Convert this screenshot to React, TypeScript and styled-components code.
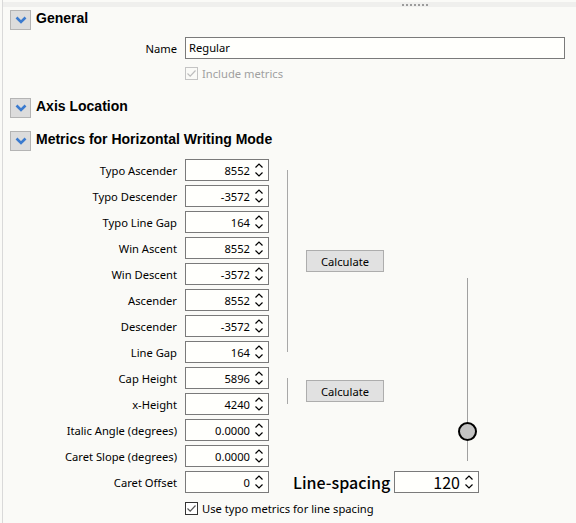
import React from 'react';
import styled, { createGlobalStyle } from 'styled-components';

const GlobalStyle = createGlobalStyle`
    html, body {
        margin: 0;
        padding: 0;
        background-color: #fafaf7;
    }
    body {
        font-family: "Segoe UI", "Noto Sans", "Liberation Sans", sans-serif;
        font-size: 11.2px;
        color: #000;
    }
`;

const Panel = styled.div`
    width: 574px;
    height: 523px;
    margin-left: 2px;
    border-left: 1px solid #d9d9d9;
    box-sizing: border-box;
    overflow: hidden;
`;

const TopBar = styled.div`
    height: 5px;
    margin-top: 2px;
    background-color: #efefed;
    display: flex;
    align-items: center;
    gap: 2px;
    padding-left: 399px;
`;

const GripDot = styled.span`
    width: 2px;
    height: 2px;
    background-color: #9c9c9c;
`;

const SectionHeader = styled.div<{ top: number }>`
    display: flex;
    align-items: flex-start;
    gap: 5px;
    padding-left: 7px;
    margin-top: ${(props) => props.top}px;
`;

const ToggleButton = styled.button`
    width: 21px;
    height: 20px;
    padding: 0;
    border: 1px solid #b4b4b4;
    background-color: #dcdcdc;
    display: flex;
    align-items: center;
    justify-content: center;
`;

const SectionTitle = styled.h2`
    margin: 0;
    font-family: "Liberation Sans", Arial, sans-serif;
    font-size: 14px;
    font-weight: bold;
    line-height: 16px;
`;

const FormRow = styled.div<{ top: number }>`
    display: grid;
    grid-template-columns: 174px auto;
    column-gap: 8px;
    align-items: center;
    margin-top: ${(props) => props.top}px;
`;

const Label = styled.span`
    text-align: right;
    white-space: nowrap;
`;

const TextInput = styled.div`
    width: 380px;
    height: 22px;
    box-sizing: border-box;
    border: 1px solid #7a7a7a;
    background-color: #fffffc;
    padding-left: 3px;
    line-height: 20px;
`;

const CheckRow = styled.label<{ disabled?: boolean }>`
    display: flex;
    align-items: center;
    gap: 4px;
    color: ${(props) => (props.disabled ? '#a0a0a0' : '#000')};
    line-height: 13px;
`;

const CheckBox = styled.span<{ disabled?: boolean }>`
    width: 13px;
    height: 13px;
    box-sizing: border-box;
    border: 1px solid ${(props) => (props.disabled ? '#c4c4c4' : '#333')};
    background-color: ${(props) => (props.disabled ? '#fafaf7' : '#fff')};
    display: flex;
    align-items: center;
    justify-content: center;
`;

const MetricsGrid = styled.div`
    display: grid;
    grid-template-columns: 174px 84px 170px 24px;
    grid-auto-rows: 22px;
    column-gap: 8px;
    row-gap: 4px;
    margin-top: 8px;
`;

const GridLabel = styled(Label)<{ row: number }>`
    grid-column: 1;
    grid-row: ${(props) => props.row};
    align-self: center;
`;

const SpinBox = styled.div<{ width?: number; big?: boolean }>`
    width: ${(props) => props.width ?? 84}px;
    height: 22px;
    box-sizing: border-box;
    border: 1px solid #7a7a7a;
    background-color: #fffffc;
    display: flex;
    align-items: center;
    justify-content: flex-end;
    padding-right: 4px;
    gap: 4px;
    font-size: ${(props) => (props.big ? '16px' : 'inherit')};
    font-family: ${(props) =>
        props.big ? '"Noto Sans CJK JP", "Noto Sans", sans-serif' : 'inherit'};
`;

const SpinCell = styled.div<{ row: number }>`
    grid-column: 2;
    grid-row: ${(props) => props.row};
`;

const Bracket = styled.div<{ rows: string }>`
    grid-column: 3;
    grid-row: ${(props) => props.rows};
    margin: 11px 0 11px 10px;
    border-left: 1px solid #a8a8a8;
    display: flex;
    align-items: center;
    padding-left: 18px;
`;

const CalcButton = styled.button`
    width: 78px;
    height: 22px;
    box-sizing: border-box;
    border: 1px solid #adadad;
    background-color: #e1e1e1;
    font-family: inherit;
    font-size: inherit;
    padding: 0;
    color: #000;
`;

const Slider = styled.div`
    grid-column: 4;
    grid-row: 5 / 13;
    display: flex;
    flex-direction: column;
    align-items: center;
    padding: 15px 0 6px;
`;

const Track = styled.div<{ grow?: boolean }>`
    width: 1px;
    background-color: #a0a0a0;
    flex: ${(props) => (props.grow ? 1 : '0 0 20px')};
`;

const Knob = styled.div`
    width: 19px;
    height: 19px;
    box-sizing: border-box;
    border-radius: 50%;
    border: 2px solid #000;
    background-color: #c3c3c3;
`;

const SpacingRow = styled.div`
    grid-column: 3 / 5;
    grid-row: 13;
    display: flex;
    align-items: center;
    justify-content: space-between;
    padding-left: 16px;
`;

const SpacingLabel = styled.span`
    font-family: "Noto Sans CJK JP", "Noto Sans", sans-serif;
    font-size: 16px;
    font-weight: 500;
`;

const FooterRow = styled(FormRow)`
    margin-top: 9px;
`;

function Chevron() {
    return (
        <svg width="12" height="8" viewBox="0 0 12 8">
            <path d="M1.5 1.5 L6 6 L10.5 1.5" fill="none" stroke="#3b7bcf" strokeWidth="2.6" />
        </svg>
    );
}

function Tick({ color }: { color: string }) {
    return (
        <svg width="11" height="11" viewBox="0 0 11 11">
            <path d="M1.5 5.5 L4.2 8.2 L9.5 2.5" fill="none" stroke={color} strokeWidth="1.2" />
        </svg>
    );
}

function Arrows() {
    return (
        <svg width="10" height="16" viewBox="0 0 10 16">
            <path d="M1.5 5.5 L5 2 L8.5 5.5" fill="none" stroke="#000" strokeWidth="1.2" />
            <path d="M1.5 10.5 L5 14 L8.5 10.5" fill="none" stroke="#000" strokeWidth="1.2" />
        </svg>
    );
}

const metrics = [
    { label: 'Typo Ascender', value: '8552' },
    { label: 'Typo Descender', value: '-3572' },
    { label: 'Typo Line Gap', value: '164' },
    { label: 'Win Ascent', value: '8552' },
    { label: 'Win Descent', value: '-3572' },
    { label: 'Ascender', value: '8552' },
    { label: 'Descender', value: '-3572' },
    { label: 'Line Gap', value: '164' },
    { label: 'Cap Height', value: '5896' },
    { label: 'x-Height', value: '4240' },
    { label: 'Italic Angle (degrees)', value: '0.0000' },
    { label: 'Caret Slope (degrees)', value: '0.0000' },
    { label: 'Caret Offset', value: '0' },
];

export default function App(): JSX.Element {
    return (
        <>
            <GlobalStyle />
            <Panel>
                <TopBar>
                    {Array.from({ length: 7 }).map((_, i) => (
                        <GripDot key={i} />
                    ))}
                </TopBar>

                <SectionHeader top={3}>
                    <ToggleButton>
                        <Chevron />
                    </ToggleButton>
                    <SectionTitle>General</SectionTitle>
                </SectionHeader>
                <FormRow top={7}>
                    <Label>Name</Label>
                    <TextInput>Regular</TextInput>
                </FormRow>
                <FormRow top={8}>
                    <span />
                    <CheckRow disabled>
                        <CheckBox disabled>
                            <Tick color="#bdbdbd" />
                        </CheckBox>
                        Include metrics
                    </CheckRow>
                </FormRow>

                <SectionHeader top={18}>
                    <ToggleButton>
                        <Chevron />
                    </ToggleButton>
                    <SectionTitle>Axis Location</SectionTitle>
                </SectionHeader>

                <SectionHeader top={13}>
                    <ToggleButton>
                        <Chevron />
                    </ToggleButton>
                    <SectionTitle>Metrics for Horizontal Writing Mode</SectionTitle>
                </SectionHeader>

                <MetricsGrid>
                    {metrics.map((m, idx) => (
                        <React.Fragment key={m.label}>
                            <GridLabel row={idx + 1}>{m.label}</GridLabel>
                            <SpinCell row={idx + 1}>
                                <SpinBox>
                                    {m.value}
                                    <Arrows />
                                </SpinBox>
                            </SpinCell>
                        </React.Fragment>
                    ))}
                    <Bracket rows="1 / 9">
                        <CalcButton>Calculate</CalcButton>
                    </Bracket>
                    <Bracket rows="9 / 11">
                        <CalcButton>Calculate</CalcButton>
                    </Bracket>
                    <Slider>
                        <Track grow />
                        <Knob />
                        <Track />
                    </Slider>
                    <SpacingRow>
                        <SpacingLabel>Line-spacing</SpacingLabel>
                        <SpinBox width={85} big>
                            120
                            <Arrows />
                        </SpinBox>
                    </SpacingRow>
                </MetricsGrid>

                <FooterRow top={9}>
                    <span />
                    <CheckRow>
                        <CheckBox>
                            <Tick color="#555" />
                        </CheckBox>
                        Use typo metrics for line spacing
                    </CheckRow>
                </FooterRow>
            </Panel>
        </>
    );
}
